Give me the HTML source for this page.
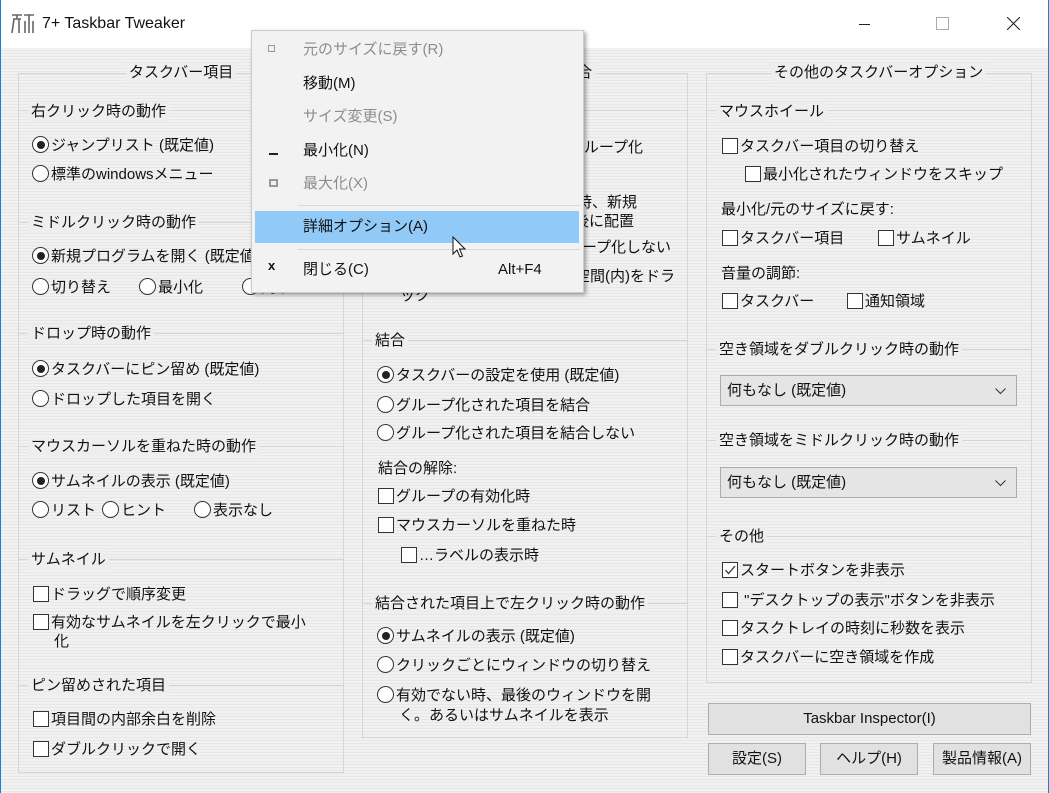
<!DOCTYPE html>
<html><head><meta charset="utf-8"><style>
*{margin:0;padding:0;box-sizing:border-box}
body{width:1049px;height:793px;overflow:hidden;position:relative;font-family:"Liberation Sans","Noto Sans CJK JP",sans-serif;font-size:15px;color:#111;background:#fff}
.win{position:absolute;left:0;top:0;width:1049px;height:793px;border:1px solid #1a7fd4;border-top:none}
.body{position:absolute;left:1px;top:48px;width:1047px;height:745px;background:repeating-linear-gradient(180deg,#f1f1f1 0 2px,#e7e7e7 2px 3px)}
.t{position:absolute;white-space:nowrap;line-height:20px;height:20px}
.tr{position:absolute;white-space:nowrap;line-height:20px;height:20px;text-align:right}
.box{position:absolute;border:1px solid #d6d6d6}
.sub{position:absolute;border-top:1px solid #d6d6d6}
.lg{position:absolute;white-space:nowrap;line-height:20px;padding:0 3px;background:#eeeeee}
.r,.c{display:inline-block;width:17px;height:17px;border:1px solid #333;vertical-align:-3px;margin-right:2px;background:#fff}
.r{border-radius:50%;position:relative}
.r.on::after{content:"";position:absolute;left:3.5px;top:3.5px;width:8px;height:8px;border-radius:50%;background:#222}
.c{width:16px;height:16px}
.btn{position:absolute;background:#e1e1e1;border:1px solid #adadad;text-align:center;line-height:29px}
.sel{position:absolute;background:#e5e5e5;border:1px solid #acacac;padding-left:6px;line-height:29px}
.menu{position:absolute;left:251px;top:30px;width:333px;height:263px;background:#f2f2f2;border:1px solid #cccccc;box-shadow:2px 2px 4px rgba(0,0,0,.35)}
.mi{position:absolute;left:51px;line-height:20px;white-space:nowrap}
.g{color:#8d8d8d}
</style></head><body>
<div class="win"></div>
<svg style="position:absolute;left:11px;top:13px" width="24" height="22" viewBox="0 0 24 22"><g fill="none" stroke="#666" stroke-width="1.6"><path d="M1 2h10M6 2v4M2 6h8M3 6l-2 14M8 6v14M13 2h10M18 2v18M14 8v12M22 8v12"/></g></svg>
<div class="t" style="left:42px;top:14px;font-size:16px">7+ Taskbar Tweaker</div>
<div style="position:absolute;left:859px;top:24px;width:11px;height:1px;background:#222"></div>
<div style="position:absolute;left:936px;top:17px;width:13px;height:13px;border:1px solid #aaa"></div>
<svg style="position:absolute;left:1007px;top:17px" width="13" height="13"><path d="M0 0L13 13M13 0L0 13" stroke="#222" stroke-width="1.1"/></svg>
<div class="body"></div>

<div class="box" style="left:18px;top:73px;width:326px;height:700px"></div>
<div class="lg" style="left:126px;top:63px">タスクバー項目</div>
<div class="sub" style="left:18px;top:110px;width:326px"></div><div class="lg" style="left:28px;top:102px">右クリック時の動作</div>
<div class="t" style="left:32px;top:136px"><span class="r on"></span>ジャンプリスト (既定値)</div>
<div class="t" style="left:32px;top:165px"><span class="r"></span>標準のwindowsメニュー</div>
<div class="sub" style="left:18px;top:222px;width:326px"></div><div class="lg" style="left:28px;top:213px">ミドルクリック時の動作</div>
<div class="t" style="left:32px;top:247px"><span class="r on"></span>新規プログラムを開く (既定値)</div>
<div class="t" style="left:32px;top:278px"><span class="r"></span>切り替え</div>
<div class="t" style="left:139px;top:278px"><span class="r"></span>最小化</div>
<div class="t" style="left:242px;top:278px"><span class="r"></span>閉じる</div>
<div class="sub" style="left:18px;top:333px;width:326px"></div><div class="lg" style="left:28px;top:324px">ドロップ時の動作</div>
<div class="t" style="left:32px;top:360px"><span class="r on"></span>タスクバーにピン留め (既定値)</div>
<div class="t" style="left:32px;top:390px"><span class="r"></span>ドロップした項目を開く</div>
<div class="sub" style="left:18px;top:446px;width:326px"></div><div class="lg" style="left:28px;top:437px">マウスカーソルを重ねた時の動作</div>
<div class="t" style="left:32px;top:472px"><span class="r on"></span>サムネイルの表示 (既定値)</div>
<div class="t" style="left:32px;top:501px"><span class="r"></span>リスト</div>
<div class="t" style="left:102px;top:501px"><span class="r"></span>ヒント</div>
<div class="t" style="left:194px;top:501px"><span class="r"></span>表示なし</div>
<div class="sub" style="left:18px;top:559px;width:326px"></div><div class="lg" style="left:28px;top:550px">サムネイル</div>
<div class="t" style="left:33px;top:585px"><span class="c"></span>ドラッグで順序変更</div>
<div class="t" style="left:33px;top:613px"><span class="c"></span>有効なサムネイルを左クリックで最小</div>
<div class="t" style="left:54px;top:632px">化</div>
<div class="sub" style="left:18px;top:685px;width:326px"></div><div class="lg" style="left:28px;top:676px">ピン留めされた項目</div>
<div class="t" style="left:33px;top:710px"><span class="c"></span>項目間の内部余白を削除</div>
<div class="t" style="left:33px;top:740px"><span class="c"></span>ダブルクリックで開く</div>

<div class="box" style="left:362px;top:73px;width:326px;height:665px"></div>
<div class="lg" style="left:470px;top:63px">グループ化と結合</div>
<div class="sub" style="left:362px;top:110px;width:326px"></div>
<div class="tr" style="right:406px;top:138px">グループ化</div>
<div class="tr" style="right:412px;top:193px">時、新規</div>
<div class="tr" style="right:415px;top:212px">後に配置</div>
<div class="tr" style="right:378px;top:238px">グループ化しない</div>
<div class="tr" style="right:374px;top:267px">空間(内)をドラ</div>
<div class="t" style="left:400px;top:286px">ック</div>
<div class="sub" style="left:362px;top:340px;width:326px"></div><div class="lg" style="left:372px;top:331px">結合</div>
<div class="t" style="left:377px;top:366px"><span class="r on"></span>タスクバーの設定を使用 (既定値)</div>
<div class="t" style="left:377px;top:396px"><span class="r"></span>グループ化された項目を結合</div>
<div class="t" style="left:377px;top:424px"><span class="r"></span>グループ化された項目を結合しない</div>
<div class="t" style="left:378px;top:459px">結合の解除:</div>
<div class="t" style="left:378px;top:487px"><span class="c"></span>グループの有効化時</div>
<div class="t" style="left:378px;top:516px"><span class="c"></span>マウスカーソルを重ねた時</div>
<div class="t" style="left:401px;top:546px"><span class="c"></span>…ラベルの表示時</div>
<div class="sub" style="left:362px;top:603px;width:326px"></div><div class="lg" style="left:372px;top:594px">結合された項目上で左クリック時の動作</div>
<div class="t" style="left:377px;top:627px"><span class="r on"></span>サムネイルの表示 (既定値)</div>
<div class="t" style="left:377px;top:656px"><span class="r"></span>クリックごとにウィンドウの切り替え</div>
<div class="t" style="left:377px;top:686px"><span class="r"></span>有効でない時、最後のウィンドウを開</div>
<div class="t" style="left:399px;top:706px">く。あるいはサムネイルを表示</div>

<div class="box" style="left:706px;top:73px;width:326px;height:610px"></div>
<div class="lg" style="left:771px;top:63px">その他のタスクバーオプション</div>
<div class="sub" style="left:706px;top:110px;width:326px"></div><div class="lg" style="left:716px;top:102px">マウスホイール</div>
<div class="t" style="left:722px;top:137px"><span class="c"></span>タスクバー項目の切り替え</div>
<div class="t" style="left:745px;top:165px"><span class="c"></span>最小化されたウィンドウをスキップ</div>
<div class="t" style="left:721px;top:200px">最小化/元のサイズに戻す:</div>
<div class="t" style="left:722px;top:229px"><span class="c"></span>タスクバー項目</div>
<div class="t" style="left:878px;top:229px"><span class="c"></span>サムネイル</div>
<div class="t" style="left:721px;top:264px">音量の調節:</div>
<div class="t" style="left:722px;top:292px"><span class="c"></span>タスクバー</div>
<div class="t" style="left:847px;top:292px"><span class="c"></span>通知領域</div>
<div class="sub" style="left:706px;top:349px;width:326px"></div><div class="lg" style="left:716px;top:340px">空き領域をダブルクリック時の動作</div>
<div class="sel" style="left:720px;top:375px;width:297px;height:31px">何もなし (既定値)<svg style="position:absolute;right:10px;top:12px" width="11" height="7"><path d="M0.5 0.5L5.5 5.5L10.5 0.5" fill="none" stroke="#333"/></svg></div>
<div class="sub" style="left:706px;top:440px;width:326px"></div><div class="lg" style="left:716px;top:431px">空き領域をミドルクリック時の動作</div>
<div class="sel" style="left:720px;top:467px;width:297px;height:31px">何もなし (既定値)<svg style="position:absolute;right:10px;top:12px" width="11" height="7"><path d="M0.5 0.5L5.5 5.5L10.5 0.5" fill="none" stroke="#333"/></svg></div>
<div class="sub" style="left:706px;top:536px;width:326px"></div><div class="lg" style="left:716px;top:527px">その他</div>
<div class="t" style="left:722px;top:561px"><span class="c" style="position:relative"><svg style="position:absolute;left:1px;top:1px" width="12" height="12"><path d="M1.5 6L4.5 9.5L11 2" fill="none" stroke="#333" stroke-width="1.3"/></svg></span>スタートボタンを非表示</div>
<div class="t" style="left:722px;top:591px"><span class="c"></span> "デスクトップの表示"ボタンを非表示</div>
<div class="t" style="left:722px;top:619px"><span class="c"></span>タスクトレイの時刻に秒数を表示</div>
<div class="t" style="left:722px;top:648px"><span class="c"></span>タスクバーに空き領域を作成</div>
<div class="btn" style="left:708px;top:703px;width:323px;height:32px">Taskbar Inspector(I)</div>
<div class="btn" style="left:708px;top:743px;width:98px;height:32px">設定(S)</div>
<div class="btn" style="left:820px;top:743px;width:98px;height:32px">ヘルプ(H)</div>
<div class="btn" style="left:933px;top:743px;width:98px;height:32px">製品情報(A)</div>

<div class="menu">
 <div style="position:absolute;left:16px;top:14px;width:7px;height:7px;border:1.5px solid #999"></div>
 <div class="mi g" style="top:9px">元のサイズに戻す(R)</div>
 <div class="mi" style="top:43px">移動(M)</div>
 <div class="mi g" style="top:76px">サイズ変更(S)</div>
 <div style="position:absolute;left:17px;top:122px;width:9px;height:2px;background:#222"></div>
 <div class="mi" style="top:110px">最小化(N)</div>
 <div style="position:absolute;left:17px;top:148px;width:9px;height:8px;border:2px solid #999"></div>
 <div class="mi g" style="top:143px">最大化(X)</div>
 <div style="position:absolute;left:46px;top:174px;width:282px;height:1px;background:#d8d8d8"></div>
 <div style="position:absolute;left:3px;top:180px;width:324px;height:32px;background:#91c9f7"></div>
 <div class="mi" style="top:186px">詳細オプション(A)</div>
 <div style="position:absolute;left:46px;top:218px;width:282px;height:1px;background:#d8d8d8"></div>
 <div style="position:absolute;left:16px;top:227px;font-weight:bold;font-size:13px">x</div>
 <div class="mi" style="top:229px">閉じる(C)</div>
 <div class="mi" style="left:246px;top:229px">Alt+F4</div>
</div>
<svg style="position:absolute;left:452px;top:236px" width="14" height="24"><path d="M1 1V18L5 14L8 21L10.5 20L7.5 13H13Z" fill="#fff" stroke="#111" stroke-width="1"/></svg>
</body></html>
